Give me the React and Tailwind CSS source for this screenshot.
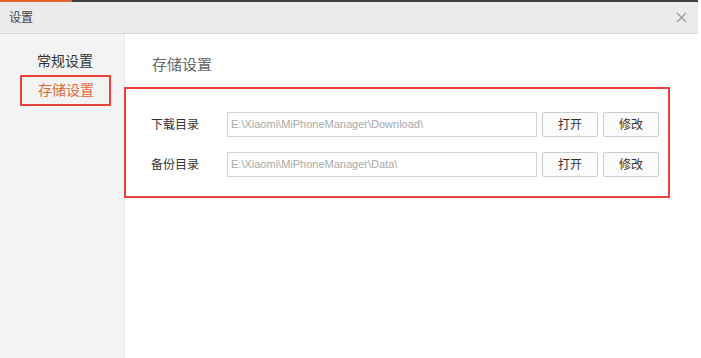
import React from 'react';

const cjk = { fontFamily: '"Liberation Sans", "Noto Sans CJK SC", sans-serif' };

function PathRow({ label, path }) {
  return (
    <div className="flex items-center h-[25px]">
      <div className="w-[76px] text-[12px] text-[#333]">{label}</div>
      <div className="w-[310px] h-[25px] border border-[#d4d4d4] flex items-center px-[3px] text-[11px] text-[#a8a8a8] bg-white">
        {path}
      </div>
      <button className="ml-[5px] w-[56px] h-[25px] border border-[#cdcdcd] rounded-[2px] bg-[#fbfbfb] text-[12px] text-[#333]">
        打开
      </button>
      <button className="ml-[5px] w-[56px] h-[25px] border border-[#cdcdcd] rounded-[2px] bg-[#fbfbfb] text-[12px] text-[#333]">
        修改
      </button>
    </div>
  );
}

export default function App() {
  return (
    <div className="w-[701px] h-[358px] bg-white flex flex-col overflow-hidden" style={cjk}>
      {/* top strip */}
      <div className="flex h-[2px] w-[698px]">
        <div className="w-[72px] bg-[#e0622c]" />
        <div className="flex-1 bg-[#3d4045]" />
      </div>

      {/* title bar */}
      <div className="h-[32px] w-[698px] bg-[#ebebec] border-b border-[#d8d8d8] flex items-center justify-between pl-[9px] pr-[11px]">
        <span className="text-[12px] text-[#444]">设置</span>
        <svg width="11" height="11" viewBox="0 0 11 11">
          <path d="M1 1L10 10M10 1L1 10" stroke="#9c9c9c" strokeWidth="1.4" />
        </svg>
      </div>

      <div className="flex flex-1">
        {/* sidebar */}
        <div className="w-[125px] bg-[#f3f3f4] border-r border-[#ebebeb] flex flex-col">
          <div className="mt-[17px] pl-[37px] h-[20px] leading-[20px] text-[14px] text-[#333]">常规设置</div>
          <div className="mt-[4px] ml-[20px] w-[91px] h-[31px] border-2 border-[#e8413e] flex items-center pl-[16px] text-[14px] text-[#e4673a]">
            存储设置
          </div>
        </div>

        {/* main */}
        <div className="flex-1 flex flex-col -ml-[1px]">
          <div className="mt-[21px] pl-[28px] h-[20px] leading-[20px] text-[15px] text-[#666]">存储设置</div>
          <div className="mt-[12px] w-[546px] h-[111px] border-[2.5px] border-[#e8413e] pl-[25px] pt-[23px] flex flex-col gap-[15px]">
            <PathRow label="下载目录" path="E:\Xiaomi\MiPhoneManager\Download\" />
            <PathRow label="备份目录" path="E:\Xiaomi\MiPhoneManager\Data\" />
          </div>
        </div>
      </div>
    </div>
  );
}
